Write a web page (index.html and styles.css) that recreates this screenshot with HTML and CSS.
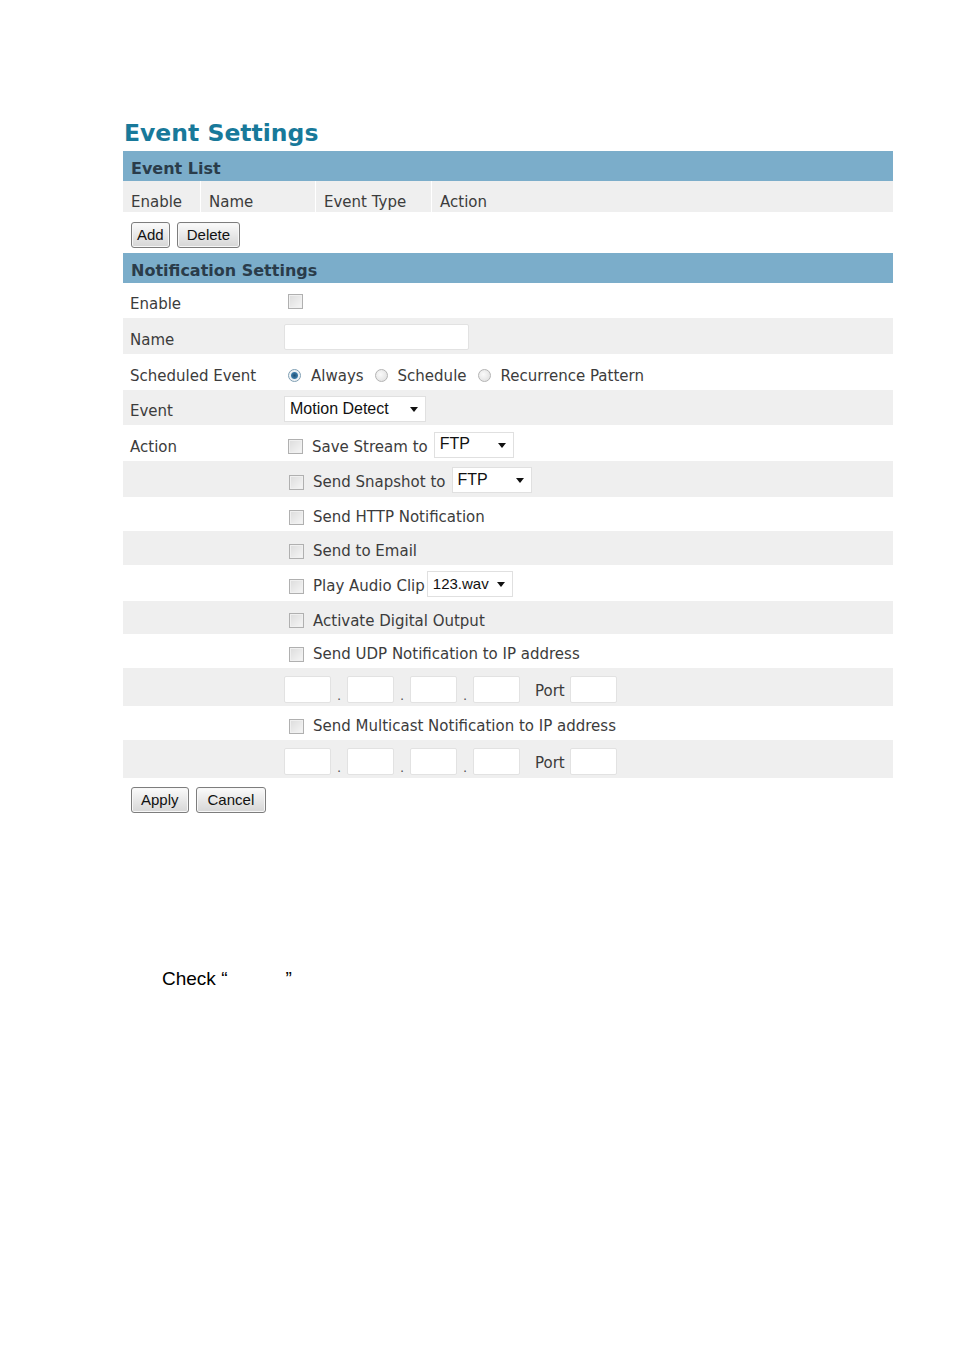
FILE: index.html
```
<!DOCTYPE html>
<html>
<head>
<meta charset="utf-8">
<link rel="stylesheet" href="styles.css">
</head>
<body>
<div class="page">
  <h1 class="title">Event Settings</h1>

  <div class="bar">Event List</div>
  <div class="list-head">
    <div class="col c1">Enable</div>
    <div class="col c2">Name</div>
    <div class="col c3">Event Type</div>
    <div class="col c4">Action</div>
  </div>
  <div class="btn-row top">
    <span class="btn tight">Add</span>
    <span class="btn del">Delete</span>
  </div>

  <div class="bar">Notification Settings</div>
  <div class="form">
    <div class="row h35">
      <div class="label">Enable</div>
      <div class="value"><span class="cb cb-first"></span></div>
    </div>
    <div class="row alt h36">
      <div class="label">Name</div>
      <div class="value"><span class="input name-input"></span></div>
    </div>
    <div class="row h36">
      <div class="label">Scheduled Event</div>
      <div class="value radios">
        <span class="radio on"></span><span class="rtext">Always</span>
        <span class="radio"></span><span class="rtext">Schedule</span>
        <span class="radio"></span><span class="rtext">Recurrence Pattern</span>
      </div>
    </div>
    <div class="row alt h35">
      <div class="label">Event</div>
      <div class="value"><span class="select w142">Motion Detect<span class="arrow"></span></span></div>
    </div>
    <div class="row h36">
      <div class="label">Action</div>
      <div class="value act first"><span class="cb"></span><span class="atext">Save Stream to</span><span class="select w80 s1">FTP<span class="arrow"></span></span></div>
    </div>
    <div class="row alt h36">
      <div class="label"></div>
      <div class="value act"><span class="cb"></span><span class="atext">Send Snapshot to</span><span class="select w80 s1">FTP<span class="arrow"></span></span></div>
    </div>
    <div class="row h34">
      <div class="label"></div>
      <div class="value act"><span class="cb"></span><span class="atext">Send HTTP Notification</span></div>
    </div>
    <div class="row alt h34">
      <div class="label"></div>
      <div class="value act"><span class="cb"></span><span class="atext">Send to Email</span></div>
    </div>
    <div class="row h36">
      <div class="label"></div>
      <div class="value act"><span class="cb"></span><span class="atext">Play Audio Clip</span><span class="select w86 s2">123.wav<span class="arrow"></span></span></div>
    </div>
    <div class="row alt h33">
      <div class="label"></div>
      <div class="value act"><span class="cb"></span><span class="atext">Activate Digital Output</span></div>
    </div>
    <div class="row h34">
      <div class="label"></div>
      <div class="value act"><span class="cb"></span><span class="atext">Send UDP Notification to IP address</span></div>
    </div>
    <div class="row alt h38">
      <div class="label"></div>
      <div class="value ip">
        <span class="input oct"></span><span class="dot">.</span>
        <span class="input oct"></span><span class="dot">.</span>
        <span class="input oct"></span><span class="dot">.</span>
        <span class="input oct"></span><span class="port">Port</span>
        <span class="input oct"></span>
      </div>
    </div>
    <div class="row h34">
      <div class="label"></div>
      <div class="value act"><span class="cb"></span><span class="atext">Send Multicast Notification to IP address</span></div>
    </div>
    <div class="row alt h38">
      <div class="label"></div>
      <div class="value ip">
        <span class="input oct"></span><span class="dot">.</span>
        <span class="input oct"></span><span class="dot">.</span>
        <span class="input oct"></span><span class="dot">.</span>
        <span class="input oct"></span><span class="port">Port</span>
        <span class="input oct"></span>
      </div>
    </div>
  </div>
  <div class="btn-row bottom">
    <span class="btn apply">Apply</span>
    <span class="btn cancel">Cancel</span>
  </div>
</div>

<p class="note">Check “<span class="gap"></span>”</p>
</body>
</html>
```

FILE: styles.css
```
html, body {
  margin: 0;
  padding: 0;
  background: #ffffff;
}

body {
  font-family: "DejaVu Sans", Verdana, sans-serif;
  color: #3c3c3c;
}

.page {
  width: 770px;
  margin-left: 123px;
  padding-top: 119px;
}

.title {
  margin: 0 0 4px 1px;
  font-size: 23.5px;
  line-height: 28px;
  font-weight: bold;
  color: #18799a;
}

.bar {
  height: 30px;
  line-height: 36px;
  background: #7badca;
  color: #2a3c4a;
  font-weight: bold;
  font-size: 16px;
  padding-left: 8px;
}

.list-head {
  display: flex;
  height: 31px;
  background: #efefef;
  font-size: 15px;
}

.col {
  line-height: 43px;
  height: 31px;
  padding-left: 8px;
  box-sizing: border-box;
}

.c1 { width: 78px; border-right: 1px solid #ffffff; }
.c2 { width: 115px; border-right: 1px solid #ffffff; }
.c3 { width: 116px; border-right: 1px solid #ffffff; }
.c4 { flex: 1; }

.btn-row {
  display: flex;
  gap: 7px;
  padding-left: 8px;
}

.btn-row.top {
  height: 41px;
  padding-top: 10px;
  box-sizing: border-box;
}

.btn-row.bottom {
  padding-top: 9px;
}

.btn {
  display: inline-block;
  height: 26px;
  box-sizing: border-box;
  padding: 0 10px;
  border: 1px solid #7d7d7d;
  border-radius: 3px;
  background: linear-gradient(#fbfbfb, #e6e6e6 55%, #d6d6d6);
  font-family: "Liberation Sans", Arial, sans-serif;
  font-size: 15px;
  line-height: 24px;
  color: #111111;
  box-shadow: inset 0 0 0 1px #f7f7f7;
}

.btn.tight { padding: 0 5px; }
.btn.del { padding: 0 9px; }
.btn.apply { padding: 0 9px; }
.btn.cancel { padding: 0 11px; }

.form {
  font-size: 15px;
}

.row {
  display: flex;
  align-items: center;
}

.row.alt { background: #efefef; }

.h33 { height: 33px; }
.h34 { height: 34px; }
.h35 { height: 35px; }
.h36 { height: 36px; }
.h38 { height: 38px; }

.label {
  width: 160px;
  flex: none;
  padding-left: 7px;
  box-sizing: border-box;
  padding-top: 7px;
}

.value {
  display: flex;
  align-items: center;
  padding-left: 1px;
}

.cb {
  display: inline-block;
  width: 13px;
  height: 13px;
  border: 1px solid #b0b0b0;
  background: linear-gradient(135deg, #dcdcdc, #f6f6f6);
  box-shadow: inset 0 0 0 1px #f0f0f0;
  flex: none;
}

.cb-first { margin-left: 4px; margin-top: 1px; }

.act { padding-left: 6px; padding-top: 6px; }
.act.first { padding-left: 5px; padding-top: 7px; }

.atext { margin-left: 9px; }

.input {
  display: inline-block;
  background: #ffffff;
  border: 1px solid #e2e2e2;
  border-radius: 2px;
  box-sizing: border-box;
  flex: none;
}

.name-input { width: 185px; height: 26px; margin-top: 1px; }

.radios { padding-left: 5px; padding-top: 7px; }

.radio {
  display: inline-block;
  width: 13px;
  height: 13px;
  border-radius: 50%;
  border: 1px solid #b4b4b4;
  background: radial-gradient(circle at 40% 40%, #fafafa, #dcdcdc);
  box-sizing: border-box;
  flex: none;
}

.radio.on {
  border-color: #7f9fb4;
  background: radial-gradient(circle, #1e4f73 0, #3a79a6 3px, #e8eef2 4px, #f6f6f6 6px);
}

.rtext { margin-left: 10px; margin-right: 11px; }

.select {
  display: inline-flex;
  align-items: center;
  height: 26px;
  box-sizing: border-box;
  background: #ffffff;
  border: 1px solid #e0e0e0;
  font-family: "Liberation Sans", Arial, sans-serif;
  font-size: 16px;
  color: #111111;
  padding-left: 5px;
  padding-bottom: 1px;
  position: relative;
  flex: none;
}

.w142 { width: 142px; margin-top: 3px; }
.w80 { width: 80px; }
.w86 { width: 86px; font-size: 15px; }

.s1 { margin-left: 6px; margin-top: -4px; }
.s2 { margin-left: 2px; margin-top: -4px; }

.arrow {
  position: absolute;
  right: 7px;
  top: 10px;
  width: 0;
  height: 0;
  border-left: 4px solid transparent;
  border-right: 4px solid transparent;
  border-top: 5px solid #111111;
}

.ip { padding-left: 1px; padding-top: 4px; }

.oct { width: 47px; height: 27px; }

.dot {
  width: 16px;
  text-align: center;
  font-size: 13px;
  padding-top: 12px;
  color: #555555;
}

.port {
  margin-left: 15px;
  margin-right: 5px;
  padding-top: 4px;
}

.note {
  margin: 155px 0 0 162px;
  font-family: "Liberation Sans", Arial, sans-serif;
  font-size: 19px;
  line-height: 22px;
  color: #000000;
}

.gap {
  display: inline-block;
  width: 58px;
}
```
